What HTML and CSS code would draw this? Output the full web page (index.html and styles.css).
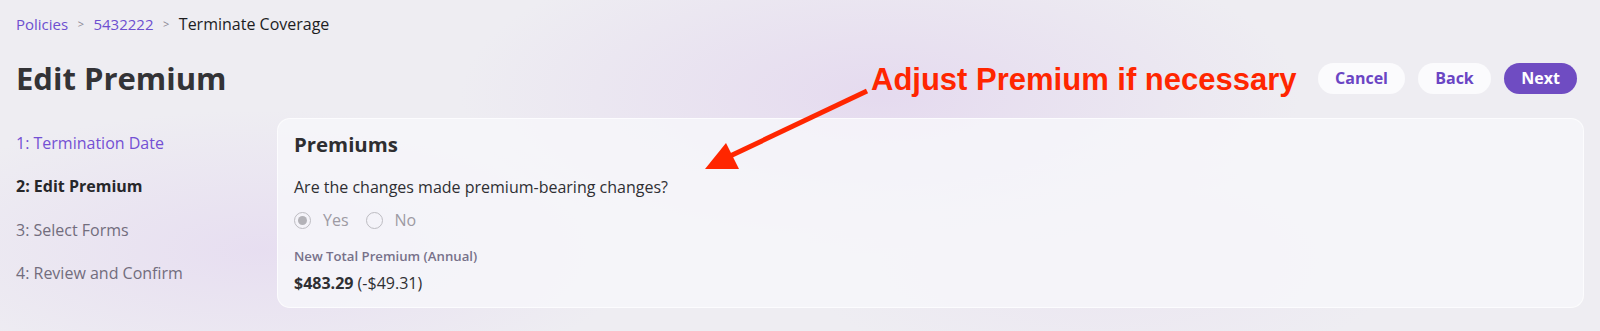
FILE: index.html
```html
<!DOCTYPE html>
<html lang="en">
<head>
<meta charset="utf-8">
<title>Edit Premium</title>
<link rel="stylesheet" href="styles.css">
</head>
<body>
<div class="page">
  <nav class="crumbs">
    <a class="crumb-link" href="#">Policies</a>
    <span class="sep">&gt;</span>
    <a class="crumb-link" href="#">5432222</a>
    <span class="sep">&gt;</span>
    <span class="crumb-current">Terminate Coverage</span>
  </nav>
  <header class="head">
    <h1 class="title">Edit Premium</h1>
    <div class="actions">
      <button class="btn btn-light">Cancel</button>
      <button class="btn btn-light">Back</button>
      <button class="btn btn-primary">Next</button>
    </div>
  </header>
  <main class="content">
    <ol class="steps">
      <li class="step step-done">1: Termination Date</li>
      <li class="step step-active">2: Edit Premium</li>
      <li class="step">3: Select Forms</li>
      <li class="step">4: Review and Confirm</li>
    </ol>
    <section class="card">
      <h2 class="card-title">Premiums</h2>
      <p class="question">Are the changes made premium-bearing changes?</p>
      <div class="radios">
        <label class="radio"><span class="dot dot-on"></span><span>Yes</span></label>
        <label class="radio"><span class="dot"></span><span>No</span></label>
      </div>
      <div class="field-label">New Total Premium (Annual)</div>
      <div class="value"><strong>$483.29</strong> (-$49.31)</div>
    </section>
  </main>
</div>
<div class="note">Adjust Premium if necessary</div>
<svg class="arrow" width="1600" height="331" viewBox="0 0 1600 331">
  <line x1="867" y1="91" x2="728" y2="157" stroke="#ff2600" stroke-width="5" stroke-linecap="butt"/>
  <polygon points="705,169 726,143 739,169" fill="#ff2600"/>
</svg>
</body>
</html>
```
FILE: styles.css
```css
* { box-sizing: border-box; }
html, body { margin: 0; padding: 0; }
body {
  width: 1600px;
  height: 331px;
  overflow: hidden;
  position: relative;
  font-family: "Open Sans", "Noto Sans", sans-serif;
  color: #2f2f33;
  background-color: #eeedf2;
  background-image:
    radial-gradient(ellipse 420px 160px at 880px 95px, rgba(226, 212, 238, 0.75), rgba(226, 212, 238, 0) 100%),
    radial-gradient(ellipse 380px 140px at 260px 250px, rgba(228, 216, 240, 0.7), rgba(228, 216, 240, 0) 100%),
    radial-gradient(ellipse 300px 120px at 1100px 260px, rgba(232, 222, 240, 0.5), rgba(232, 222, 240, 0) 100%);
}
.page {
  padding: 14px 16px 0 16px;
}
.crumbs {
  display: flex;
  align-items: center;
  height: 20px;
  font-size: 15px;
  line-height: 20px;
}
.crumb-link {
  color: #6d4fd0;
  text-decoration: none;
}
.sep {
  color: #8a8792;
  font-size: 11px;
  margin: 0 9.5px 0 9.5px;
}
.crumb-current { color: #1d1d1f; font-size: 16px; }

.head {
  display: flex;
  align-items: center;
  justify-content: space-between;
  height: 40px;
  margin-top: 24px;
}
.title {
  margin: 0;
  font-size: 31px;
  line-height: 38px;
  font-weight: 700;
  color: #333336;
}
.actions {
  display: flex;
  gap: 13px;
  padding-right: 7px;
}
.btn {
  height: 31px;
  border: none;
  border-radius: 16px;
  font-family: "Open Sans", sans-serif;
  font-size: 16px;
  font-weight: 700;
  padding: 0;
  cursor: pointer;
}
.btn-light {
  background: #fbfbfd;
  color: #6a45c4;
}
.btn-light:first-child { width: 87px; }
.btn-light + .btn-light { width: 73px; }
.btn-primary {
  width: 73px;
  background: #6f4cc2;
  color: #ffffff;
}

.content {
  display: grid;
  grid-template-columns: 245px 1fr;
  gap: 16px;
  margin-top: 20px;
}
.steps {
  list-style: none;
  margin: 0;
  padding: 4px 0 0 0;
}
.step {
  font-size: 16px;
  line-height: 21.4px;
  padding: 11px 0;
  color: #726d7d;
}
.step-done { color: #7450d4; }
.step-active { color: #27272a; font-weight: 700; }

.card {
  height: 190px;
  background: rgba(247, 246, 250, 0.82);
  border: 1px solid rgba(255, 255, 255, 0.7);
  border-radius: 13px;
  padding: 11px 16px 0 16px;
}
.card-title {
  margin: 0;
  font-size: 20.4px;
  line-height: 28px;
  font-weight: 700;
  color: #2e2e31;
}
.question {
  margin: 18px 0 0 0;
  font-size: 16px;
  line-height: 22px;
  color: #2f2f33;
}
.radios {
  display: flex;
  gap: 17px;
  margin-top: 11px;
  height: 22px;
  align-items: center;
}
.radio {
  display: flex;
  align-items: center;
  gap: 12px;
  font-size: 16px;
  color: #9d9aa3;
}
.dot {
  width: 17px;
  height: 17px;
  border-radius: 50%;
  border: 1.5px solid #bdbcc2;
  display: flex;
  align-items: center;
  justify-content: center;
}
.dot-on::after {
  content: "";
  width: 9px;
  height: 9px;
  border-radius: 50%;
  background: #b3b2b8;
}
.field-label {
  margin-top: 16px;
  font-size: 13.2px;
  line-height: 18px;
  font-weight: 600;
  color: #77718a;
}
.value {
  margin-top: 7px;
  font-size: 16px;
  line-height: 22px;
  color: #2f2f33;
}
.value strong { font-weight: 700; }

.note {
  position: absolute;
  left: 871px;
  top: 62px;
  font-family: "Liberation Sans", Arial, sans-serif;
  font-weight: 700;
  font-size: 31px;
  line-height: 36px;
  color: #ff2600;
  white-space: nowrap;
}
.arrow {
  position: absolute;
  left: 0;
  top: 0;
  pointer-events: none;
}
```
